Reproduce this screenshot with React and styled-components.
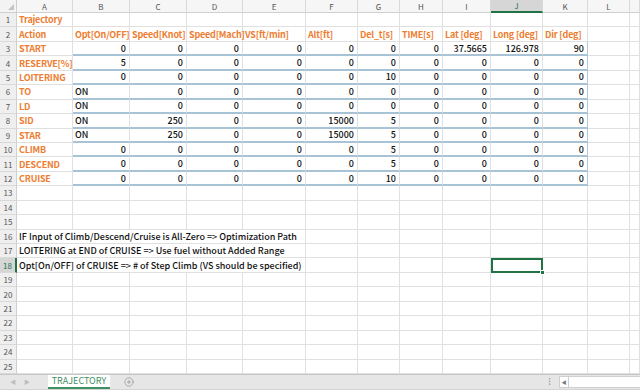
import React from 'react';
import styled, { createGlobalStyle } from 'styled-components';
import { CirclePlus, EllipsisVertical } from 'lucide-react';

const GlobalStyle = createGlobalStyle`
  html, body {
    margin: 0;
    padding: 0;
    background: #ffffff;
    overflow: hidden;
  }
  body {
    font-family: "Noto Sans CJK KR", "Noto Sans", sans-serif;
  }
`;

// row header + columns A..L; column M takes what is left
const COL_WIDTHS = [17, 56, 57, 57, 56, 63, 52, 42, 43, 48, 52, 45, 42];
const LETTERS = ['A', 'B', 'C', 'D', 'E', 'F', 'G', 'H', 'I', 'J', 'K', 'L', ''];
const NCOL = LETTERS.length;
const ROW_COUNT = 25;
const SELECTED = { row: 18, col: 9 };

const HEADERS = ['Action', 'Opt[On/OFF]', 'Speed[Knot]', 'Speed[Mach]', 'VS[ft/min]', 'Alt[ft]', 'Del_t[s]', 'TIME[s]', 'Lat [deg]', 'Long [deg]', 'Dir [deg]'];

const DATA = [
  ['START', 0, 0, 0, 0, 0, 0, 0, '37.5665', '126.978', 90],
  ['RESERVE[%]', 5, 0, 0, 0, 0, 0, 0, 0, 0, 0],
  ['LOITERING', 0, 0, 0, 0, 0, 10, 0, 0, 0, 0],
  ['TO', 'ON', 0, 0, 0, 0, 0, 0, 0, 0, 0],
  ['LD', 'ON', 0, 0, 0, 0, 0, 0, 0, 0, 0],
  ['SID', 'ON', 250, 0, 0, 15000, 5, 0, 0, 0, 0],
  ['STAR', 'ON', 250, 0, 0, 15000, 5, 0, 0, 0, 0],
  ['CLIMB', 0, 0, 0, 0, 0, 5, 0, 0, 0, 0],
  ['DESCEND', 0, 0, 0, 0, 0, 5, 0, 0, 0, 0],
  ['CRUISE', 0, 0, 0, 0, 0, 10, 0, 0, 0, 0],
];

const NOTES = {
  16: 'IF Input of Climb/Descend/Cruise is All-Zero => Optimization Path',
  17: 'LOITERING at END of CRUISE => Use fuel without Added Range',
  18: 'Opt[On/OFF] of CRUISE => # of Step Climb (VS should be specified)',
};

const Window = styled.div`
  width: 640px;
  height: 391px;
  display: flex;
  flex-direction: column;
  overflow: hidden;
  background: #ffffff;
`;

const Sheet = styled.div`
  display: grid;
  grid-template-columns: ${COL_WIDTHS.map((w) => `${w}px`).join(' ')} 1fr;
  grid-template-rows: 13px repeat(${ROW_COUNT}, 14.44px);
  font-size: 9px;
  color: #1a1a1a;
`;

const Corner = styled.div`
  position: relative;
  background: #f3f3f3;
  border-right: 1px solid #cfcfcf;
  border-bottom: 1px solid #cfcfcf;
  box-sizing: border-box;

  &::after {
    content: '';
    position: absolute;
    right: 2px;
    bottom: 2px;
    border-left: 6px solid transparent;
    border-bottom: 6px solid #c4c4c4;
  }
`;

const ColHead = styled.div`
  display: flex;
  align-items: center;
  justify-content: center;
  box-sizing: border-box;
  font-size: 8px;
  color: ${({ $active }) => ($active ? '#217346' : '#555555')};
  background: ${({ $active }) => ($active ? '#d6d6d6' : '#f6f6f6')};
  border-right: 1px solid #d9d9d9;
  border-bottom: ${({ $active }) => ($active ? '2px solid #217346' : '1px solid #cfcfcf')};
`;

const RowHead = styled.div`
  display: flex;
  align-items: center;
  justify-content: center;
  box-sizing: border-box;
  font-size: 8px;
  color: ${({ $active }) => ($active ? '#217346' : '#555555')};
  background: ${({ $active }) => ($active ? '#d6d6d6' : '#efefef')};
  border-bottom: 1px solid #d9d9d9;
  border-right: ${({ $active }) => ($active ? '2px solid #217346' : '1px solid #cfcfcf')};
`;

const Cell = styled.div`
  position: relative;
  display: flex;
  align-items: center;
  justify-content: ${({ $align }) => ($align === 'right' ? 'flex-end' : 'flex-start')};
  box-sizing: border-box;
  padding: 0 3px 0 2px;
  white-space: nowrap;
  grid-column: ${({ $span }) => ($span ? `span ${$span}` : 'auto')};
  font-weight: ${({ $label }) => ($label ? 700 : 500)};
  letter-spacing: ${({ $label }) => ($label ? '-0.2px' : '0')};
  color: ${({ $label }) => ($label ? '#ed7d31' : '#111111')};
  border-right: 1px solid ${({ $edge }) => ($edge ? '#b3c7d6' : '#e0e0e0')};
  border-bottom: ${({ $blue }) => ($blue ? '2px solid #a9c3d6' : '1px solid #e0e0e0')};
  outline: ${({ $selected }) => ($selected ? '2px solid #217346' : 'none')};
  outline-offset: -2px;
`;

const Handle = styled.span`
  position: absolute;
  right: -3px;
  bottom: -3px;
  width: 5px;
  height: 5px;
  background: #217346;
  border: 1px solid #ffffff;
  box-sizing: border-box;
  z-index: 2;
`;

const TabBar = styled.div`
  display: flex;
  align-items: stretch;
  height: 14px;
  background: #e6e6e6;
  border-top: 1px solid #c6c6c6;
  border-bottom: 1px solid #d4d4d4;
`;

const NavArrows = styled.div`
  display: flex;
  align-items: center;
  gap: 8px;
  width: 48px;
  padding-left: 10px;
  box-sizing: border-box;
  color: #bdbdbd;
  font-size: 6px;
`;

const SheetTab = styled.div`
  display: flex;
  align-items: center;
  justify-content: center;
  width: 62px;
  background: #ffffff;
  color: #3f9063;
  font-size: 9px;
  border-bottom: 2px solid #3f9063;
  box-sizing: border-box;
`;

const AddButton = styled.div`
  display: flex;
  align-items: center;
  justify-content: center;
  width: 38px;
  color: #8a8a8a;
`;

const Spacer = styled.div`
  flex: 1;
`;

const Dots = styled.div`
  display: flex;
  align-items: center;
  width: 14px;
  color: #9a9a9a;
`;

const Scrollbar = styled.div`
  display: flex;
  align-items: center;
  width: 81px;
  margin: 1px 0;
  background: #ffffff;
  border: 1px solid #cfcfcf;
  border-right: none;
  box-sizing: border-box;
`;

const ScrollArrow = styled.div`
  display: flex;
  align-items: center;
  justify-content: center;
  width: 8px;
  height: 100%;
  border-right: 1px solid #cfcfcf;
  color: #777777;
  font-size: 5px;
`;

const Footer = styled.div`
  flex: 1;
  background: #ffffff;
`;

function fill(cells, from, r) {
  for (let c = from; c < NCOL; c++) {
    const sel = r === SELECTED.row && c === SELECTED.col;
    cells.push(
      <Cell key={c} $selected={sel}>
        {sel && <Handle />}
      </Cell>
    );
  }
  return cells;
}

function rowCells(r) {
  const cells = [];
  if (r === 1) {
    cells.push(<Cell key="a" $label>Trajectory</Cell>);
    return fill(cells, 1, r);
  }
  if (r === 2) {
    HEADERS.forEach((h, i) => cells.push(<Cell key={i} $label>{h}</Cell>));
    return fill(cells, HEADERS.length, r);
  }
  if (r >= 3 && r <= 12) {
    const row = DATA[r - 3];
    row.forEach((v, i) => {
      if (i === 0) {
        cells.push(<Cell key={i} $label>{v}</Cell>);
        return;
      }
      cells.push(
        <Cell key={i} $align={v === 'ON' ? 'left' : 'right'} $blue $edge={i === 10}>
          {v}
        </Cell>
      );
    });
    return fill(cells, row.length, r);
  }
  if (NOTES[r]) {
    cells.push(<Cell key="note" $span={5}>{NOTES[r]}</Cell>);
    return fill(cells, 5, r);
  }
  return fill(cells, 0, r);
}

export default function App() {
  const rows = Array.from({ length: ROW_COUNT }, (_, i) => i + 1);
  return (
    <Window>
      <GlobalStyle />
      <Sheet>
        <Corner />
        {LETTERS.map((l, i) => (
          <ColHead key={i} $active={i === SELECTED.col}>{l}</ColHead>
        ))}
        {rows.map((r) => (
          <React.Fragment key={r}>
            <RowHead $active={r === SELECTED.row}>{r}</RowHead>
            {rowCells(r)}
          </React.Fragment>
        ))}
      </Sheet>
      <TabBar>
        <NavArrows>
          <span>◀</span>
          <span>▶</span>
        </NavArrows>
        <SheetTab>TRAJECTORY</SheetTab>
        <AddButton>
          <CirclePlus size={10} strokeWidth={1.5} />
        </AddButton>
        <Spacer />
        <Dots>
          <EllipsisVertical size={9} />
        </Dots>
        <Scrollbar>
          <ScrollArrow>◀</ScrollArrow>
        </Scrollbar>
      </TabBar>
      <Footer />
    </Window>
  );
}
